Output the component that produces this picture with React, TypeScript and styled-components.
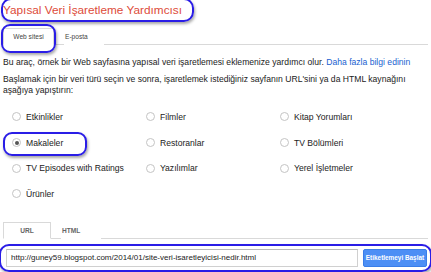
import React from "react";
import styled, { createGlobalStyle } from "styled-components";

const GlobalStyle = createGlobalStyle`
  html, body {
    margin: 0;
    padding: 0;
    background: #fff;
  }
  body {
    font-family: "Liberation Sans", Arial, sans-serif;
    color: #222;
    overflow: hidden;
  }
`;

const Page = styled.div`
  width: 431px;
  height: 272px;
  padding: 0 3px;
  box-sizing: border-box;
`;

// blue hand-drawn annotation ring around a part of the screenshot
const Marked = styled.div<{ $t: number; $r: number; $b: number; $l: number; $radius?: number }>`
  position: relative;
  &::after {
    content: "";
    position: absolute;
    top: ${(p) => p.$t}px;
    right: ${(p) => p.$r}px;
    bottom: ${(p) => p.$b}px;
    left: ${(p) => p.$l}px;
    border: 2px solid #2a1de6;
    border-radius: ${(p) => p.$radius ?? 9}px;
    box-shadow: 1px 2px 3px rgba(0, 0, 0, 0.35);
    pointer-events: none;
  }
`;

const Title = styled.h1`
  margin: 0;
  font-size: 11.8px;
  line-height: 18px;
  font-weight: normal;
  color: #dd4b39;
  display: inline-block;
`;

const TabBar = styled.div<{ $top: number }>`
  display: flex;
  align-items: flex-end;
  gap: 10px;
  margin-top: ${(p) => p.$top}px;
  border-bottom: 1px solid #d9d9d9;
  height: 16px;
`;

const Tab = styled.div<{ $active?: boolean; $bold?: boolean; $w: number }>`
  box-sizing: border-box;
  width: ${(p) => p.$w}px;
  height: 17px;
  margin-bottom: -1px;
  display: flex;
  align-items: center;
  justify-content: ${(p) => (p.$active ? "center" : "flex-start")};
  font-size: 6.6px;
  font-weight: ${(p) => (p.$bold ? "bold" : "normal")};
  color: ${(p) => (p.$bold ? "#666" : "#444")};
  border: 1px solid ${(p) => (p.$active ? "#d9d9d9" : "transparent")};
  border-bottom-color: ${(p) => (p.$active ? "#fff" : "transparent")};
  background: #fff;
`;

const Text = styled.p<{ $top: number }>`
  margin: ${(p) => p.$top}px 0 0;
  font-size: 8.6px;
  line-height: 11px;
  color: #222;
`;

const Link = styled.a`
  color: #1a5fd0;
  text-decoration: none;
`;

const RadioGrid = styled.div`
  display: grid;
  grid-template-columns: 134px 134px 134px;
  grid-auto-rows: 25.7px;
  margin: 8px 0 0 9px;
`;

const Choice = styled.label`
  display: flex;
  align-items: center;
  gap: 5px;
  font-size: 8.6px;
  color: #222;
  height: 25.7px;
`;

const Radio = styled.input.attrs({ type: "radio" })`
  appearance: none;
  margin: 0;
  width: 9px;
  height: 9px;
  border-radius: 50%;
  border: 1px solid #c4c4c4;
  box-sizing: border-box;
  background: #fff;
  display: grid;
  place-items: center;
  &:checked::before {
    content: "";
    width: 4px;
    height: 4px;
    border-radius: 50%;
    background: #555;
  }
`;

const InputRow = styled.div`
  display: flex;
  align-items: center;
  gap: 5px;
  height: 22px;
  padding: 0 1px 0 3px;
`;

const UrlInput = styled.input`
  flex: 1;
  box-sizing: border-box;
  height: 18px;
  border: 1px solid #d0d0d0;
  border-top-color: #b8b8b8;
  padding: 0 4px;
  font-family: "Liberation Sans", Arial, sans-serif;
  font-size: 8px;
  color: #222;
  outline: none;
`;

const StartButton = styled.button`
  box-sizing: border-box;
  width: 64px;
  height: 18px;
  padding: 0;
  border: 1px solid #3a7de8;
  border-radius: 2px;
  background: #4d8ff5;
  color: #fff;
  font-family: "Liberation Sans", Arial, sans-serif;
  font-size: 6.4px;
  font-weight: bold;
  white-space: nowrap;
`;

const types = [
  "Etkinlikler",
  "Filmler",
  "Kitap Yorumları",
  "Makaleler",
  "Restoranlar",
  "TV Bölümleri",
  "TV Episodes with Ratings",
  "Yazılımlar",
  "Yerel İşletmeler",
  "Ürünler",
];

export default function App() {
  return (
    <Page>
      <GlobalStyle />
      <Marked $t={-2} $r={-12} $b={-3} $l={-2} $radius={10} style={{ display: "inline-block" }}>
        <Title>Yapısal Veri İşaretleme Yardımcısı</Title>
      </Marked>

      <TabBar $top={9}>
        <Marked $t={-4} $r={-2} $b={-9} $l={-2} $radius={9}>
          <Tab $active $w={51}>Web sitesi</Tab>
        </Marked>
        <Tab $w={40}>E-posta</Tab>
      </TabBar>

      <Text $top={12}>
        Bu araç, örnek bir Web sayfasına yapısal veri işaretlemesi eklemenize yardımcı olur.{" "}
        <Link href="#">Daha fazla bilgi edinin</Link>
      </Text>
      <Text $top={6}>
        Başlamak için bir veri türü seçin ve sonra, işaretlemek istediğiniz sayfanın URL'sini ya da HTML kaynağını
        aşağıya yapıştırın:
      </Text>

      <RadioGrid>
        {types.map((t) =>
          t === "Makaleler" ? (
            <Marked key={t} $t={2} $r={59} $b={-1} $l={-9} $radius={9}>
              <Choice>
                <Radio name="type" defaultChecked />
                {t}
              </Choice>
            </Marked>
          ) : (
            <Choice key={t}>
              <Radio name="type" />
              {t}
            </Choice>
          )
        )}
      </RadioGrid>

      <TabBar $top={15}>
        <Tab $active $bold $w={48}>URL</Tab>
        <Tab $bold $w={40}>HTML</Tab>
      </TabBar>

      <Marked $t={-3} $r={-4} $b={-3} $l={-4} $radius={10} style={{ marginTop: 8 }}>
        <InputRow>
          <UrlInput defaultValue="http://guney59.blogspot.com/2014/01/site-veri-isaretleyicisi-nedir.html" />
          <StartButton>Etiketlemeyi Başlat</StartButton>
        </InputRow>
      </Marked>
    </Page>
  );
}
